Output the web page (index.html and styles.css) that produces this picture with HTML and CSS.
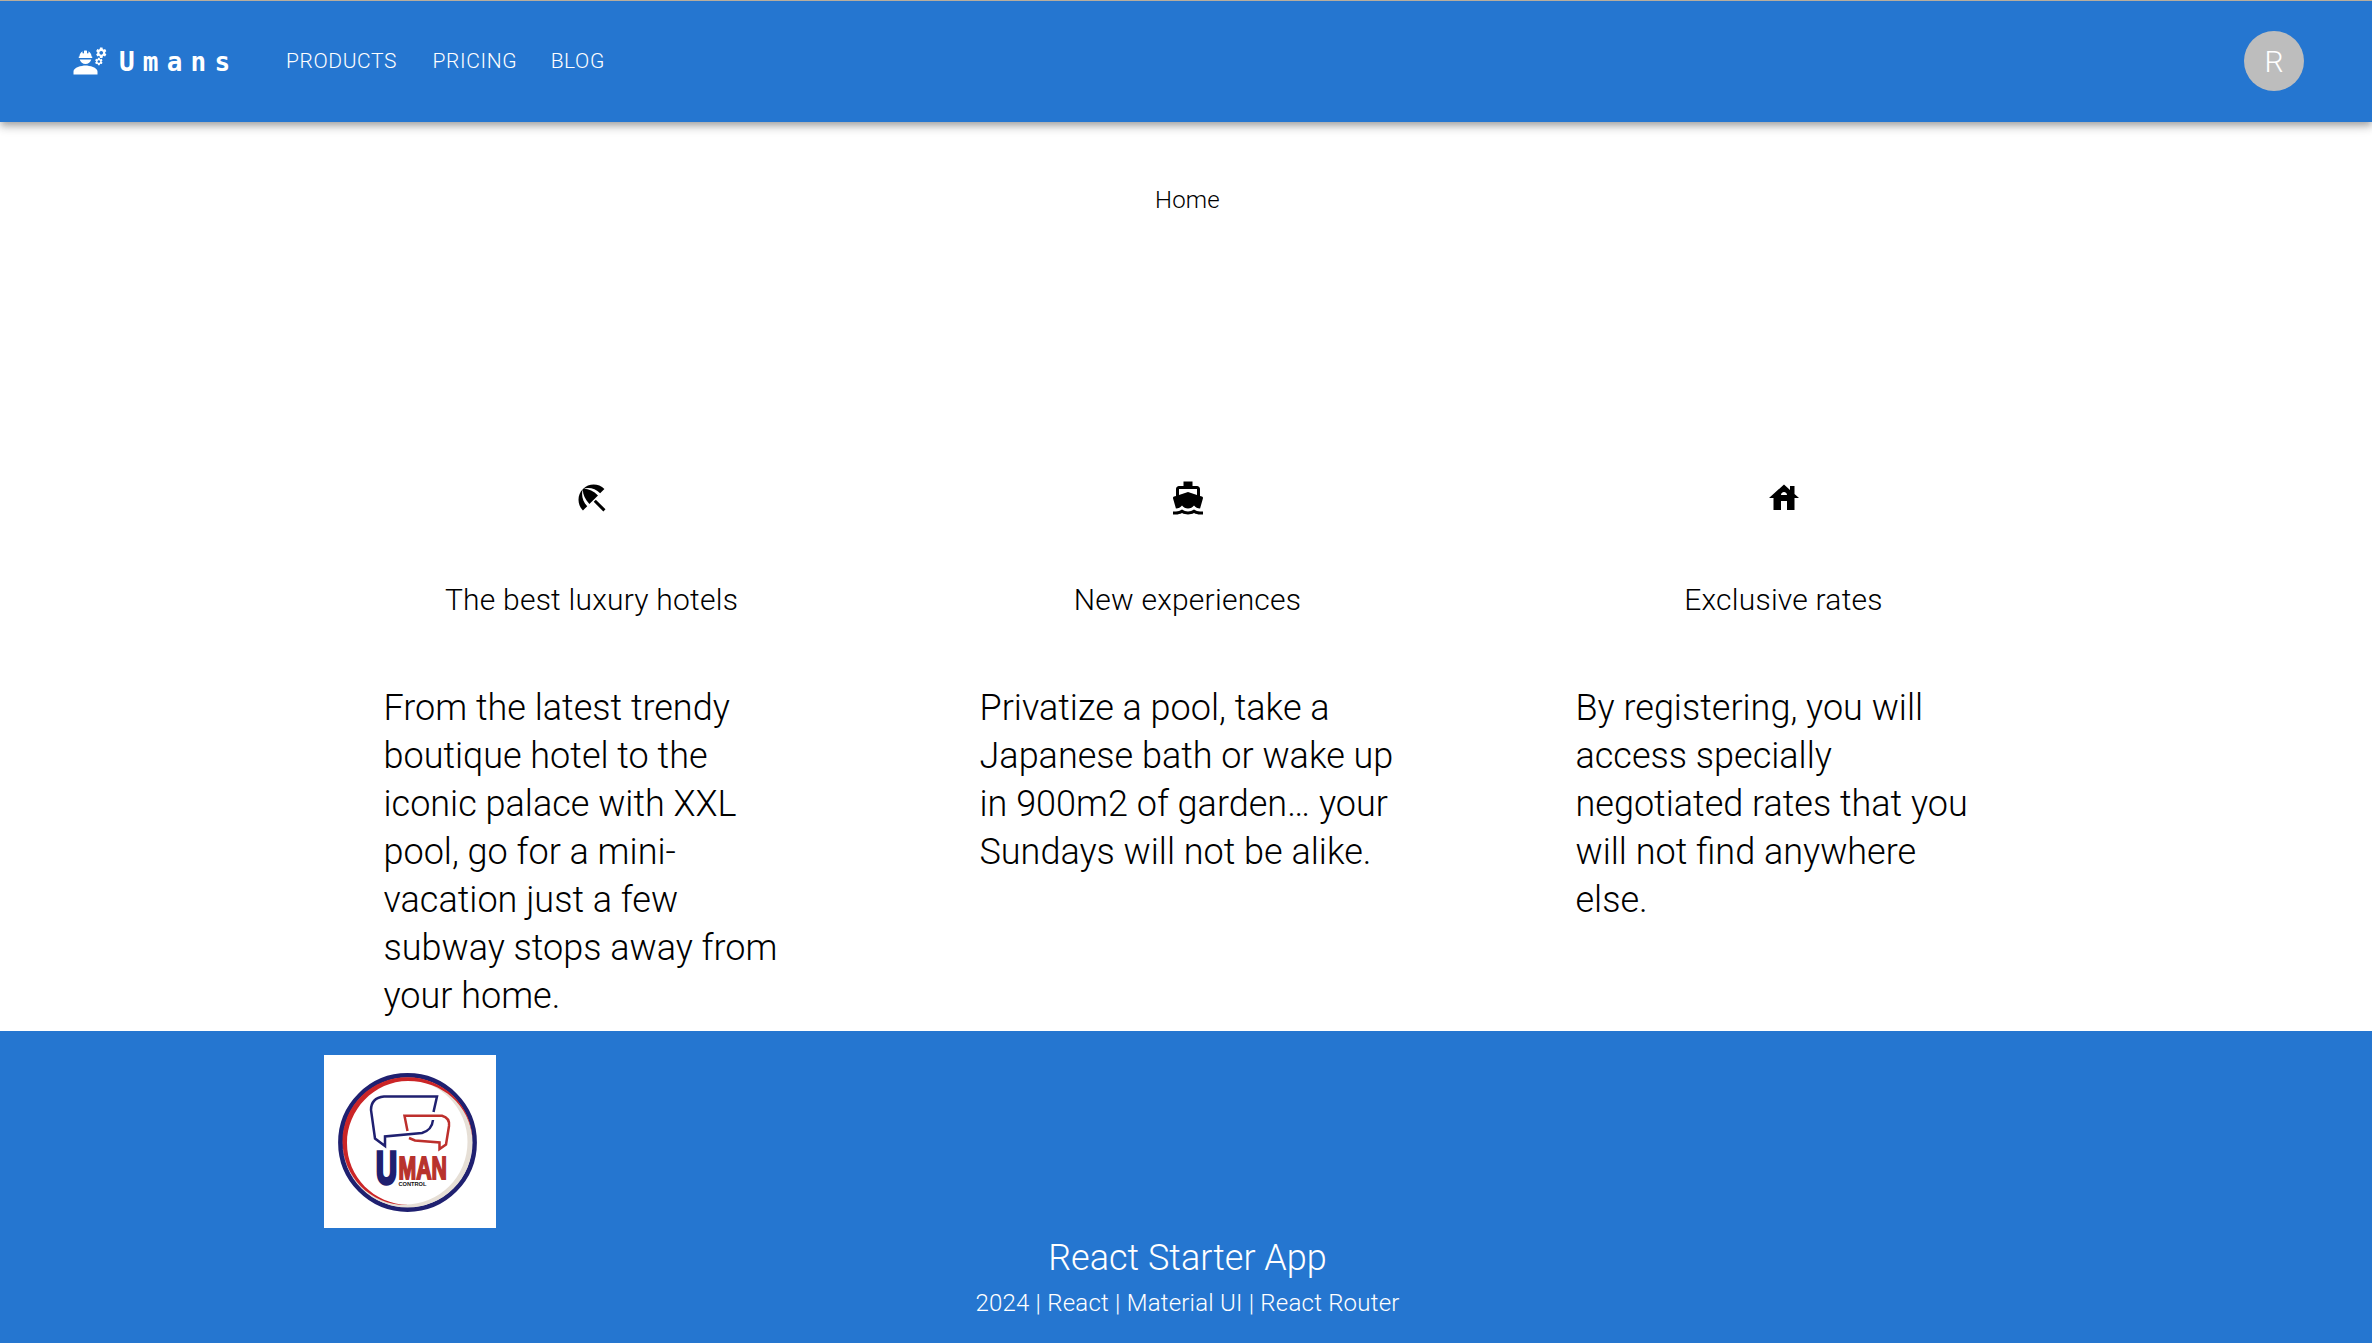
FILE: index.html
```html
<!DOCTYPE html>
<html lang="en">
<head>
<meta charset="utf-8">
<title>Umans</title>
<link rel="stylesheet" href="styles.css">
</head>
<body>
<header class="appbar">
  <a class="brand">
    <svg class="icon" viewBox="0 0 24 24">
      <path d="M9 15c-2.67 0-8 1.34-8 4v2h16v-2c0-2.66-5.33-4-8-4zM4.75 10h8.5c.14 0 .25-.11.25-.25v-.5c0-.14-.11-.25-.25-.25H13c0-1.48-.81-2.75-2-3.45v.95c0 .28-.22.5-.5.5s-.5-.22-.5-.5V5.14C9.68 5.06 9.35 5 9 5s-.68.06-1 .14V6.5c0 .28-.22.5-.5.5S7 6.78 7 6.5v-.95C5.81 6.25 5 7.52 5 9h-.25c-.14 0-.25.11-.25.25v.5c0 .14.11.25.25.25zM9 14c1.86 0 3.41-1.28 3.86-3H5.14c.45 1.72 2 3 3.86 3z"/>
      <path id="gear" d="M22.1 6.84c.01-.11.02-.22.02-.34 0-.12-.01-.23-.03-.34l.74-.58c.07-.05.08-.15.04-.22l-.7-1.21c-.04-.08-.14-.1-.21-.08l-.86.35c-.18-.14-.38-.25-.59-.34l-.13-.93c-.02-.09-.09-.15-.18-.15h-1.4c-.09 0-.16.06-.17.15l-.13.93c-.21.09-.41.21-.59.34l-.87-.35c-.08-.03-.17 0-.21.08l-.7 1.21c-.04.08-.03.17.04.22l.74.58c-.02.11-.03.23-.03.34 0 .11.01.23.03.34l-.74.58c-.07.05-.08.15-.04.22l.7 1.21c.04.08.14.1.21.08l.87-.35c.18.14.38.25.59.34l.13.93c.01.09.08.15.17.15h1.4c.09 0 .16-.06.17-.15l.13-.93c.21-.09.41-.21.59-.34l.87.35c.08.03.17 0 .21-.08l.7-1.21c.04-.08.03-.17-.04-.22l-.73-.58zm-2.6.91c-.69 0-1.25-.56-1.25-1.25s.56-1.25 1.25-1.25 1.25.56 1.25 1.25-.56 1.25-1.25 1.25z"/>
      <use href="#gear" transform="translate(3.85 7.65) scale(.72)"/>
    </svg>
    <span class="brand-name">Umans</span>
  </a>
  <nav class="nav">
    <a>PRODUCTS</a>
    <a>PRICING</a>
    <a>BLOG</a>
  </nav>
  <div class="avatar">R</div>
</header>

<main>
  <p class="page-title">Home</p>
  <section class="features">
    <article class="feature">
      <svg class="icon" viewBox="0 0 24 24"><path d="M13.127 14.56l1.43-1.43 6.44 6.443L19.57 21zm4.293-5.73l2.86-2.86c-3.95-3.95-10.35-3.96-14.3-.02 3.93-1.3 8.31-.25 11.44 2.88zM5.95 5.98c-3.94 3.95-3.93 10.35.02 14.3l2.86-2.86C5.7 14.29 4.65 9.91 5.95 5.98zm.02-.02l-.01.01c-.38 3.01 1.17 6.88 4.3 10.02l5.73-5.73c-3.13-3.13-7.01-4.68-10.02-4.3z"/></svg>
      <h2>The best luxury hotels</h2>
      <p>From the latest trendy boutique hotel to the iconic palace with XXL pool, go for a mini-vacation just a few subway stops away from your home.</p>
    </article>
    <article class="feature">
      <svg class="icon" viewBox="0 0 24 24"><path d="M20 21c-1.39 0-2.78-.47-4-1.32-2.44 1.71-5.56 1.71-8 0C6.78 20.53 5.39 21 4 21H2v2h2c1.38 0 2.74-.35 4-.99 2.52 1.29 5.48 1.29 8 0 1.26.65 2.62.99 4 .99h2v-2h-2zM3.95 19H4c1.6 0 3.02-.88 4-2 .98 1.12 2.4 2 4 2s3.02-.88 4-2c.98 1.12 2.4 2 4 2h.05l1.89-6.68c.08-.26.06-.54-.06-.78s-.34-.42-.6-.5L20 10.62V6c0-1.1-.9-2-2-2h-3V1H9v3H6c-1.1 0-2 .9-2 2v4.62l-1.29.42c-.26.08-.48.26-.6.5s-.15.52-.06.78L3.95 19zM6 6h12v3.97L12 8 6 9.97V6z"/></svg>
      <h2>New experiences</h2>
      <p>Privatize a pool, take a Japanese bath or wake up in 900m2 of garden… your Sundays will not be alike.</p>
    </article>
    <article class="feature">
      <svg class="icon" viewBox="0 0 24 24"><path d="M19 9.3V4h-3v2.6L12 3 2 12h3v8h5v-6h4v6h5v-8h3l-3-2.7zm-9 .7c0-1.1.9-2 2-2s2 .9 2 2h-4z"/></svg>
      <h2>Exclusive rates</h2>
      <p>By registering, you will access specially negotiated rates that you will not find anywhere else.</p>
    </article>
  </section>
</main>

<footer class="footer">
  <svg class="logo" viewBox="0 0 172 173">
    <rect width="172" height="173" fill="#fff"/>
    <circle cx="83.5" cy="87.5" r="67" fill="none" stroke="#1f2070" stroke-width="4.8"/>
    <path fill="#e6dfd6" fill-rule="evenodd" d="M83.5 22.500a65 65 0 1 1 0 130a65 65 0 1 1 0-130zM81 24.500a62.500 62.500 0 1 0 0 125a62.500 62.500 0 1 0 0-125z"/>
    <path fill="#cb2527" fill-rule="evenodd" d="M83 22.300C120 22 148 52 148.500 84C146 50 118 26 84 26C50 26 23 55 23 88C23 122 50 149 84 150C47 151 18.500 122 18.500 86C19 50 48 22.500 83 22.300z"/>
    <g fill="none" stroke-width="2.500">
      <path stroke="#1f2070" d="M109.500 57L113 41.500H60Q47 43 47 55L51 83.500L61 91V81.500L98 78Q108 75 109 65"/>
      <path stroke="#bd2f2c" d="M83.500 76L80.500 60.800H118Q126 63 125 71L122 89.500L115.500 94V87.500L91 85.500L85 83"/>
    </g>
    <text class="logo-u" x="52" y="129" textLength="21" lengthAdjust="spacingAndGlyphs">U</text>
    <text class="logo-man" x="74.500" y="124" textLength="48.500" lengthAdjust="spacingAndGlyphs">MAN</text>
    <text class="logo-control" x="74.500" y="130.500" textLength="28" lengthAdjust="spacingAndGlyphs">CONTROL</text>
  </svg>
  <p class="footer-title">React Starter App</p>
  <p class="footer-links">2024 | React | Material UI | React Router</p>
</footer>
</body>
</html>
```
FILE: styles.css
```css
* { box-sizing: border-box; }

body {
  margin: 0;
  height: 1343px;
  display: flex;
  flex-direction: column;
  overflow: hidden;
  background: #fff;
  color: #000;
  font-family: Roboto, "Liberation Sans", sans-serif;
  font-weight: 300;
}

h2, p { margin: 0; font-weight: 300; }

.icon {
  display: block;
  flex: none;
  width: 36px;
  height: 36px;
  fill: currentColor;
}

.appbar {
  flex: none;
  display: flex;
  align-items: center;
  height: 122px;
  padding: 0 68px 1px 72px;
  border-top: 1px solid #b9ad9c;
  background: #2576d0;
  color: #fff;
  box-shadow: 0 3px 6px -1.5px rgba(0, 0, 0, .2), 0 6px 7.5px rgba(0, 0, 0, .14), 0 1.5px 15px rgba(0, 0, 0, .12);
}

.brand { display: flex; align-items: center; gap: 11px; width: 203px; }

.brand-name {
  padding-top: 2px;
  font: 700 26px/36px "DejaVu Sans Mono", monospace;
  letter-spacing: 8.2px;
}

.nav {
  display: flex;
  gap: 12px;
  font-size: 21px;
  line-height: 36px;
  letter-spacing: .6px;
}

.nav a { padding: 0 10.5px 0 11px; }

.nav a:first-child { padding-right: 12.5px; }

.avatar {
  display: flex;
  align-items: center;
  justify-content: center;
  width: 60px;
  height: 60px;
  margin-left: auto;
  border-radius: 50%;
  background: #bdbdbd;
  font-size: 30px;
}

main { flex: none; height: 909px; padding: 60px 0 0 3px; }

.page-title {
  font-size: 24px;
  line-height: 36px;
  letter-spacing: .225px;
  text-align: center;
}

.features {
  display: grid;
  grid-template-columns: repeat(3, 596px);
  justify-content: center;
  margin-top: 262px;
}

.feature { display: flex; flex-direction: column; align-items: center; }

.feature h2 {
  margin-top: 60px;
  font-size: 30px;
  line-height: 48px;
  letter-spacing: .225px;
}

.feature p {
  width: 416px;
  margin-top: 60px;
  font-size: 36px;
  line-height: 48px;
}

.footer {
  flex: 1;
  padding: 24px 321px 0 324px;
  background: #2576d0;
  color: #fff;
  text-align: center;
}

.logo { display: block; width: 172px; height: 173px; }

.logo-u {
  font: 700 46px "Liberation Sans", sans-serif;
  fill: #1f2070;
  stroke: #1f2070;
  stroke-width: 3.5px;
}

.logo-man {
  font: 700 31px "Liberation Sans", sans-serif;
  fill: #b8322d;
  stroke: #b8322d;
  stroke-width: 1.8px;
}

.logo-control { font: 700 5px "Liberation Sans", sans-serif; fill: #111; }

.footer-title { font-size: 36px; line-height: 48px; margin-top: 6px; }

.footer-links { font-size: 24px; line-height: 36px; letter-spacing: .225px; margin-top: 3px; }
```
